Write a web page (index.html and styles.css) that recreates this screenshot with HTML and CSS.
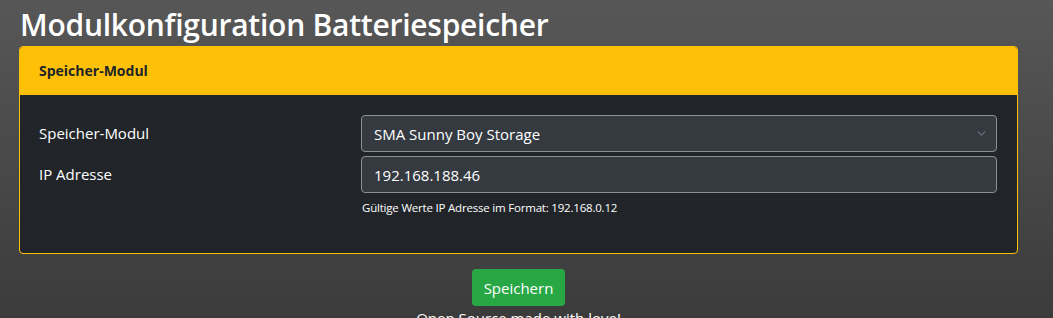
FILE: index.html
```html
<!DOCTYPE html>
<html lang="de">

<head>
    <meta charset="utf-8">
    <meta name="viewport" content="width=device-width, initial-scale=1.0">
    <title>Modulkonfiguration Batteriespeicher</title>
    <link rel="stylesheet" href="styles.css">
</head>

<body>
    <main class="container">
        <h1>Modulkonfiguration Batteriespeicher</h1>

        <section class="card">
            <header class="card-header">Speicher-Modul</header>
            <div class="card-body">
                <div class="form-row">
                    <label for="modul">Speicher-Modul</label>
                    <div class="field">
                        <div class="select-wrap">
                            <select id="modul" class="form-control">
                                <option>SMA Sunny Boy Storage</option>
                            </select>
                            <svg class="chevron" width="11" height="9" viewBox="0 0 16 16">
                                <path d="M2 5l6 6 6-6" fill="none" stroke="#6c727a" stroke-width="2" stroke-linecap="round" stroke-linejoin="round" />
                            </svg>
                        </div>
                    </div>
                </div>
                <div class="form-row">
                    <label for="ip">IP Adresse</label>
                    <div class="field">
                        <input id="ip" class="form-control" type="text" value="192.168.188.46">
                        <small class="hint">Gültige Werte IP Adresse im Format: 192.168.0.12</small>
                    </div>
                </div>
            </div>
        </section>

        <div class="actions">
            <button class="btn-save">Speichern</button>
        </div>

        <footer class="footer">Open Source made with love!</footer>
    </main>
</body>

</html>
```

FILE: styles.css
```css
*,
body * {
    box-sizing: border-box;
}

html {
    height: 100%;
}

body {
    margin: 0;
    padding: 0;
    min-height: 100%;
    background: linear-gradient(180deg, #575757 0%, #3b3b3b 100%);
    color: #fff;
    font-family: "Open Sans", "Noto Sans", sans-serif;
    font-size: 15px;
}

.container {
    width: 999px;
    margin-left: 19px;
}

h1 {
    margin: 0;
    padding: 4px 0 0 1px;
    font-size: 30px;
    font-weight: 600;
    line-height: 42px;
    letter-spacing: -0.25px;
}

.card {
    border: 1px solid #ffc107;
    border-radius: 4px;
    background-color: #212529;
    overflow: hidden;
}

.card-header {
    height: 48px;
    padding: 0 19px;
    line-height: 48px;
    background-color: #ffc107;
    color: #212529;
    font-weight: 700;
    font-size: 14px;
}

.card-body {
    padding: 20px 20px 22px 19px;
}

.form-row {
    display: grid;
    grid-template-columns: 322px 1fr;
    margin-bottom: 4px;
}

.form-row label {
    padding-top: 8px;
    font-size: 15px;
}

.select-wrap {
    position: relative;
}

.chevron {
    position: absolute;
    right: 10px;
    top: 14px;
}

.form-control {
    display: block;
    width: 100%;
    height: 37px;
    padding: 0 12px;
    border: 1px solid #8a9096;
    border-radius: 4px;
    background-color: #343a40;
    color: #fff;
    font-family: inherit;
    font-size: 15px;
    appearance: none;
    -webkit-appearance: none;
}

.hint {
    display: block;
    margin-top: 7px;
    padding-left: 1px;
    font-size: 11.5px;
    letter-spacing: -0.2px;
    color: #fff;
    height: 27px;
}

.actions {
    text-align: center;
    padding-top: 15px;
}

.btn-save {
    height: 37px;
    padding: 0 12px;
    border: 0;
    border-radius: 4px;
    background-color: #28a745;
    color: #fff;
    font-family: inherit;
    font-size: 15px;
}

.footer {
    text-align: center;
    padding-top: 2px;
    font-size: 15px;
}
```
